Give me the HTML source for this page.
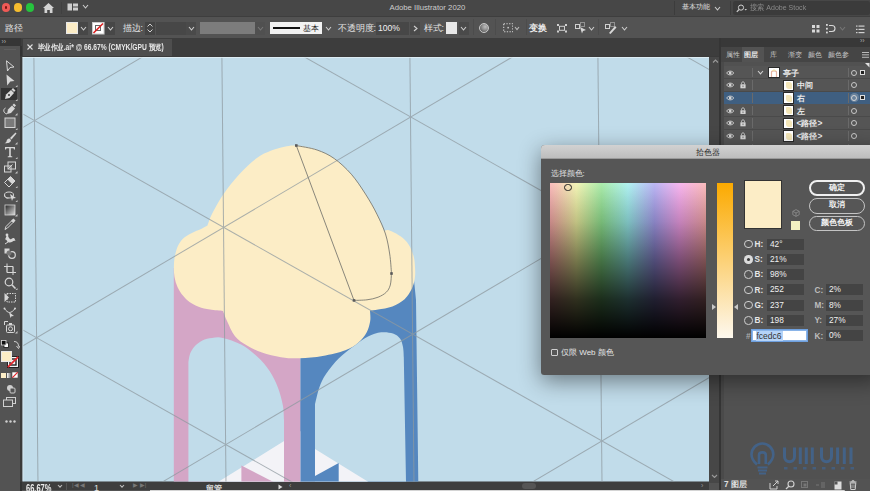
<!DOCTYPE html>
<html><head><meta charset="utf-8">
<style>
*{margin:0;padding:0;box-sizing:border-box}
html,body{width:870px;height:491px;overflow:hidden;background:#535353;font-family:"Liberation Sans",sans-serif;color:#ddd}
.a{position:absolute}
.btn{border-radius:8px;font-size:8.2px;color:#f2f2f2;text-align:center;line-height:13px;font-weight:bold}
.lbl{font-size:8.2px;color:#e6e6e6;line-height:12px;font-weight:bold;margin-top:0.9px}
.inp{width:37px;height:11px;background:#444444;font-size:8.3px;color:#f0f0f0;line-height:11.5px;padding-left:3px}
</style></head><body>
<div class="a" style="left:0px;top:0px;width:870px;height:16px;background:#474747;"></div>
<div class="a" style="left:1.7999999999999998px;top:3.3px;width:8.4px;height:8.4px;border-radius:50%;background:#ee5a56"></div>
<div class="a" style="left:13.8px;top:3.3px;width:8.4px;height:8.4px;border-radius:50%;background:#f5bd2f"></div>
<div class="a" style="left:25.8px;top:3.3px;width:8.4px;height:8.4px;border-radius:50%;background:#26c33e"></div>
<div class="a" style="left:4.6px;top:5.9px;width:2.8px;height:2.8px;border-radius:50%;background:#7a1410"></div>
<svg class="a" style="left:42px;top:2px" width="13" height="12"><path d="M6.5,1 L12,6 L10.5,6 L10.5,11 L7.8,11 L7.8,8 L5.2,8 L5.2,11 L2.5,11 L2.5,6 L1,6 Z" fill="#d4d4d4"/></svg>
<div class="a" style="left:61.3px;top:2px;width:0.8px;height:12px;background:#404040;"></div>
<svg class="a" style="left:66.5px;top:2.6px" width="12" height="8"><rect x="0.5" y="0.5" width="4.5" height="7" fill="#cfcfcf"/><rect x="6" y="0.5" width="5" height="3" fill="#cfcfcf"/><rect x="6" y="4.5" width="5" height="3" fill="#cfcfcf"/></svg>
<svg class="a" style="left:81.5px;top:3.8px" width="7" height="5"><path d="M1,1 L3.50,4 L6,1" fill="none" stroke="#cfcfcf" stroke-width="1.1"/></svg>
<div class="a" style="left:389.5px;top:2.5px;font-size:7.75px;line-height:9.75px;color:#cccccc;white-space:nowrap;">Adobe Illustrator 2020</div>
<div class="a" style="left:674px;top:1px;width:1px;height:14px;background:#3c3c3c;"></div>
<div class="a" style="left:682px;top:3px;font-size:6.7px;line-height:8.7px;color:#e0e0e0;white-space:nowrap;">基本功能</div>
<svg class="a" style="left:713.5px;top:5.5px" width="7" height="5"><path d="M1,1 L3.50,4 L6,1" fill="none" stroke="#cfcfcf" stroke-width="1.1"/></svg>
<div class="a" style="left:730px;top:1px;width:1px;height:14px;background:#3c3c3c;"></div>
<div class="a" style="left:733px;top:1px;width:137px;height:14px;background:#3b3b3b;border-radius:2px"></div>
<svg class="a" style="left:736px;top:3.5px" width="12" height="9"><circle cx="5" cy="3.6" r="2.6" fill="none" stroke="#cfcfcf" stroke-width="1"/><path d="M3.1,5.5 L0.8,7.8" stroke="#cfcfcf" stroke-width="1.2"/><path d="M8.5,5 L11,5 L9.75,6.5 Z" fill="#cfcfcf"/></svg>
<div class="a" style="left:749.5px;top:2.5px;font-size:7.8px;line-height:9.8px;color:#8a8a8a;white-space:nowrap;transform:scaleX(0.9);transform-origin:0 0">搜索 Adobe Stock</div>
<div class="a" style="left:0px;top:16px;width:870px;height:22px;background:#535353;"></div>
<div class="a" style="left:0px;top:16px;width:870px;height:0.6px;background:#3e3e3e;"></div>
<div class="a" style="left:5px;top:23px;font-size:8.6px;line-height:10.6px;color:#e2e2e2;white-space:nowrap;">路径</div>
<div class="a" style="left:66px;top:22.3px;width:11.5px;height:11.5px;background:#fcedc6;border:1px solid #e8e8e8"></div>
<div class="a" style="left:78px;top:21.5px;width:10px;height:13px;background:#474747;"></div>
<svg class="a" style="left:79.5px;top:25.5px" width="7" height="5"><path d="M1,1 L3.50,4 L6,1" fill="none" stroke="#cfcfcf" stroke-width="1.1"/></svg>
<svg class="a" style="left:92px;top:22px" width="12.5" height="12.5"><rect x="0.5" y="0.5" width="11.5" height="11.5" fill="#fff" stroke="#ccc"/><rect x="3.5" y="3.5" width="5" height="5" fill="none" stroke="#666" stroke-width="1"/><path d="M1.5,11 L11,1.5" stroke="#d22" stroke-width="1.6"/></svg>
<div class="a" style="left:105px;top:21.5px;width:10px;height:13px;background:#474747;"></div>
<svg class="a" style="left:106.5px;top:25.5px" width="7" height="5"><path d="M1,1 L3.50,4 L6,1" fill="none" stroke="#cfcfcf" stroke-width="1.1"/></svg>
<div class="a" style="left:122.5px;top:23px;font-size:8.6px;line-height:10.6px;color:#e2e2e2;white-space:nowrap;">描边:</div>
<div class="a" style="left:144.5px;top:21.5px;width:10.5px;height:13px;background:#444;"></div>
<svg class="a" style="left:146px;top:22px" width="8" height="12"><path d="M1.5,4.5 L4,2 L6.5,4.5 M1.5,7.5 L4,10 L6.5,7.5" fill="none" stroke="#cfcfcf" stroke-width="1"/></svg>
<div class="a" style="left:156px;top:21.5px;width:30px;height:13px;background:#474747;"></div>
<div class="a" style="left:186px;top:21.5px;width:10px;height:13px;background:#4a4a4a;"></div>
<svg class="a" style="left:187.5px;top:25.5px" width="7" height="5"><path d="M1,1 L3.50,4 L6,1" fill="none" stroke="#cfcfcf" stroke-width="1.1"/></svg>
<div class="a" style="left:200px;top:22.3px;width:54.5px;height:12.2px;background:#7c7c7c;"></div>
<div class="a" style="left:255px;top:21.5px;width:10px;height:13px;background:#505050;"></div>
<svg class="a" style="left:256.5px;top:25.5px" width="7" height="5"><path d="M1,1 L3.50,4 L6,1" fill="none" stroke="#777" stroke-width="1.1"/></svg>
<div class="a" style="left:269.7px;top:22.3px;width:52.5px;height:12.2px;background:#f2f2f2;"></div>
<div class="a" style="left:273px;top:27.3px;width:27px;height:1.8px;background:#111;"></div>
<div class="a" style="left:303px;top:23px;font-size:8.3px;line-height:10.3px;color:#222;white-space:nowrap;">基本</div>
<svg class="a" style="left:324.5px;top:25.5px" width="7" height="5"><path d="M1,1 L3.50,4 L6,1" fill="none" stroke="#cfcfcf" stroke-width="1.1"/></svg>
<div class="a" style="left:337.5px;top:23px;font-size:8.6px;line-height:10.6px;color:#e2e2e2;white-space:nowrap;">不透明度:</div>
<div class="a" style="left:376px;top:21.5px;width:33px;height:13px;background:#474747;"></div>
<div class="a" style="left:378px;top:23.2px;font-size:8.6px;line-height:10.6px;color:#f0f0f0;white-space:nowrap;">100%</div>
<div class="a" style="left:410px;top:21.5px;width:10px;height:13px;background:#4a4a4a;"></div>
<svg class="a" style="left:412.5px;top:25px" width="6" height="7"><path d="M1,1 L4,3.5 L1,6" fill="none" stroke="#cfcfcf" stroke-width="1.1"/></svg>
<div class="a" style="left:423.5px;top:23px;font-size:8.6px;line-height:10.6px;color:#e2e2e2;white-space:nowrap;">样式:</div>
<div class="a" style="left:445.6px;top:22.3px;width:11.4px;height:11.6px;background:#e8e8e8;"></div>
<div class="a" style="left:459px;top:21.5px;width:10px;height:13px;background:#4a4a4a;"></div>
<svg class="a" style="left:460.0px;top:25.5px" width="7" height="5"><path d="M1,1 L3.50,4 L6,1" fill="none" stroke="#cfcfcf" stroke-width="1.1"/></svg>
<div class="a" style="left:472.5px;top:19px;width:0.8px;height:16px;background:#4c4c4c;"></div>
<div class="a" style="left:495.3px;top:19px;width:0.8px;height:16px;background:#4c4c4c;"></div>
<div class="a" style="left:525.9px;top:19px;width:0.8px;height:16px;background:#4c4c4c;"></div>
<div class="a" style="left:597.6px;top:19px;width:0.8px;height:16px;background:#4c4c4c;"></div>
<div class="a" style="left:478.8px;top:22.8px;width:10.4px;height:10.4px;border-radius:50%;border:1px solid #c8c8c8;background:radial-gradient(circle at 65% 35%,#bdbdbd,#8a8a8a 45%,#5a5a5a 80%)"></div>
<svg class="a" style="left:502.5px;top:23.2px" width="10.5" height="9.5"><rect x="0.7" y="0.7" width="9" height="8" fill="none" stroke="#d0d0d0" stroke-width="1.1" stroke-dasharray="1.3 1.4"/><rect x="4.4" y="3.9" width="1.5" height="1.5" fill="#d0d0d0"/></svg>
<svg class="a" style="left:513.5px;top:26.2px" width="6" height="4.5"><path d="M1,1 L3.00,3.5 L5,1" fill="none" stroke="#bbb" stroke-width="1.1"/></svg>
<div class="a" style="left:529px;top:23px;font-size:8.8px;line-height:10.8px;color:#ececec;white-space:nowrap;font-weight:bold">变换</div>
<svg class="a" style="left:556.5px;top:24px" width="10" height="8.5"><rect x="2.5" y="2.3" width="5" height="4" fill="none" stroke="#d0d0d0" stroke-width="1"/><g fill="#d0d0d0"><rect x="0" y="0" width="2" height="2"/><rect x="8" y="0" width="2" height="2"/><rect x="0" y="6.5" width="2" height="2"/><rect x="8" y="6.5" width="2" height="2"/></g></svg>
<svg class="a" style="left:575px;top:22px" width="12" height="12"><g fill="none" stroke="#d0d0d0" stroke-width="1"><rect x="0.5" y="2.5" width="4" height="4"/><rect x="5.5" y="0.5" width="4" height="4" stroke-dasharray="1 1"/></g><path d="M5,5 L11,8 L8,9 L7,11.5 Z" fill="#d8d8d8"/></svg>
<svg class="a" style="left:587.5px;top:25.5px" width="7" height="5"><path d="M1,1 L3.50,4 L6,1" fill="none" stroke="#cfcfcf" stroke-width="1.1"/></svg>
<svg class="a" style="left:605px;top:22px" width="12" height="12"><g fill="none" stroke="#d0d0d0" stroke-width="1"><rect x="0.5" y="2.5" width="4" height="4"/><rect x="5.5" y="0.5" width="4" height="4" stroke-dasharray="1 1"/></g><path d="M4,11 L10,4 L11.5,5.5 L5.5,12 Z" fill="#d8d8d8"/></svg>
<svg class="a" style="left:620.5px;top:25.5px" width="7" height="5"><path d="M1,1 L3.50,4 L6,1" fill="none" stroke="#cfcfcf" stroke-width="1.1"/></svg>
<svg class="a" style="left:811.5px;top:24.5px" width="8" height="8"><g fill="#d8d8d8"><rect x="0" y="0" width="3" height="3"/><rect x="4.5" y="0" width="3" height="3"/><rect x="0" y="4.5" width="3" height="3"/><rect x="4.5" y="4.5" width="3" height="3"/></g></svg>
<svg class="a" style="left:826px;top:23.5px" width="10" height="10"><g fill="#d8d8d8"><rect x="0" y="0" width="1.8" height="1.8"/><rect x="0" y="3.8" width="1.8" height="1.8"/><rect x="0" y="7.6" width="1.8" height="1.8"/></g><path d="M3,1.5 L6,1.5 A3,3 0 0 1 6,7.5 L3,7.5" fill="none" stroke="#d8d8d8" stroke-width="1.1"/></svg>
<svg class="a" style="left:839.0px;top:25.5px" width="7" height="5"><path d="M1,1 L3.50,4 L6,1" fill="none" stroke="#777" stroke-width="1.1"/></svg>
<svg class="a" style="left:856px;top:24.5px" width="9" height="9"><g fill="#d0d0d0"><rect x="0" y="0.5" width="1.5" height="1.2"/><rect x="2.5" y="0.5" width="6" height="1.2"/><rect x="0" y="3.8" width="1.5" height="1.2"/><rect x="2.5" y="3.8" width="6" height="1.2"/><rect x="0" y="7" width="1.5" height="1.2"/><rect x="2.5" y="7" width="6" height="1.2"/></g></svg>
<div class="a" style="left:0px;top:38px;width:870px;height:19px;background:#3d3d3d;"></div>
<div class="a" style="left:22.5px;top:39px;width:149px;height:17.5px;background:#4e4e4e;"></div>
<svg class="a" style="left:26.5px;top:44px" width="6" height="6"><path d="M0.5,0.5 L5.5,5.5 M5.5,0.5 L0.5,5.5" stroke="#e0e0e0" stroke-width="1.1"/></svg>
<div class="a" style="left:37.5px;top:41.8px;font-size:8.3px;line-height:10.3px;color:#e8e8e8;white-space:nowrap;font-weight:bold;transform:scaleX(0.805);transform-origin:0 0">毕业作业.ai* @ 66.67% (CMYK/GPU 预览)</div>
<div class="a" style="left:0px;top:38px;width:20.5px;height:8px;background:#363636;"></div>
<div class="a" style="left:1.5px;top:37px;font-size:7px;line-height:9px;color:#aaa;white-space:nowrap;">››</div>
<div class="a" style="left:0px;top:46px;width:19.6px;height:445px;background:#535353;"></div>
<div class="a" style="left:19.6px;top:46px;width:2.8px;height:445px;background:#333333;"></div>
<div class="a" style="left:4px;top:49px;width:12px;height:0.8px;background:#5e5e5e;"></div>
<div class="a" style="left:1.3px;top:87.8px;width:15.8px;height:12.5px;background:#333333;"></div>
<svg class="a" style="left:3px;top:59.6px" width="14" height="12"><path d="M3.5,0.8 L11,7 L7,7.5 L4.5,11 Z" fill="none" stroke="#d6d6d6" stroke-width="1"/></svg>
<svg class="a" style="left:3px;top:74.0px" width="14" height="12"><path d="M3.5,0.5 L11.5,7 L7.3,7.6 L4.2,11.5 Z" fill="#d6d6d6"/></svg>
<svg class="a" style="left:15px;top:84.5px" width="2.5" height="2.5"><path d="M2.5,0 L2.5,2.5 L0,2.5 Z" fill="#c8c8c8"/></svg>
<svg class="a" style="left:3px;top:88.4px" width="14" height="12"><path d="M2,11 L3,6.5 L8,2 L11,5 L6.5,10 Z" fill="#d6d6d6"/><path d="M8.5,1.5 L10,0 L12.5,2.5 L11,4" fill="#d6d6d6"/><circle cx="6" cy="7" r="1" fill="#333"/></svg>
<svg class="a" style="left:15px;top:98.9px" width="2.5" height="2.5"><path d="M2.5,0 L2.5,2.5 L0,2.5 Z" fill="#c8c8c8"/></svg>
<svg class="a" style="left:3px;top:102.9px" width="14" height="12"><path d="M4,11 L5,6.5 L9,2.5 L12,5.5 L8,10 Z" fill="#d6d6d6"/><path d="M9.5,2 L11,0.5 L13,2.5 L11.5,4" fill="#d6d6d6"/><path d="M4,11 C0,10 0,6 2.5,5" fill="none" stroke="#d6d6d6" stroke-width="1"/></svg>
<svg class="a" style="left:15px;top:113.4px" width="2.5" height="2.5"><path d="M2.5,0 L2.5,2.5 L0,2.5 Z" fill="#c8c8c8"/></svg>
<svg class="a" style="left:3px;top:117.3px" width="14" height="12"><rect x="2" y="1" width="10" height="9.5" fill="#7a7a7a" stroke="#d6d6d6" stroke-width="1"/></svg>
<svg class="a" style="left:15px;top:127.8px" width="2.5" height="2.5"><path d="M2.5,0 L2.5,2.5 L0,2.5 Z" fill="#c8c8c8"/></svg>
<svg class="a" style="left:3px;top:131.7px" width="14" height="12"><path d="M12.5,0.5 L7,6 L8.5,7.5 L13.5,1.5 Z" fill="#d6d6d6"/><path d="M6.5,6.5 C4.5,6.5 3.5,8 3.5,9.5 C3,10.5 2,11 1.5,11.2 C4,11.5 8,11 8,8 Z" fill="#d6d6d6"/></svg>
<svg class="a" style="left:15px;top:142.2px" width="2.5" height="2.5"><path d="M2.5,0 L2.5,2.5 L0,2.5 Z" fill="#c8c8c8"/></svg>
<svg class="a" style="left:3px;top:146.1px" width="14" height="12"><path d="M2,1 L12,1 L12,3.5 L11,3.5 L10.5,2.2 L7.8,2.2 L7.8,10 L9.3,10.5 L9.3,11.2 L4.7,11.2 L4.7,10.5 L6.2,10 L6.2,2.2 L3.5,2.2 L3,3.5 L2,3.5 Z" fill="#d6d6d6"/></svg>
<svg class="a" style="left:15px;top:156.6px" width="2.5" height="2.5"><path d="M2.5,0 L2.5,2.5 L0,2.5 Z" fill="#c8c8c8"/></svg>
<svg class="a" style="left:3px;top:160.5px" width="14" height="12"><rect x="1.5" y="5" width="6.5" height="6" fill="none" stroke="#d6d6d6" stroke-width="1"/><rect x="5" y="1" width="7.5" height="7" fill="none" stroke="#d6d6d6" stroke-width="1"/><path d="M5,8 L9.5,3.5" stroke="#d6d6d6" stroke-width="1"/></svg>
<svg class="a" style="left:15px;top:171.0px" width="2.5" height="2.5"><path d="M2.5,0 L2.5,2.5 L0,2.5 Z" fill="#c8c8c8"/></svg>
<svg class="a" style="left:3px;top:175.0px" width="14" height="12"><path d="M1.5,7.5 L7.5,1.5 L12,6 L6,12 Z" fill="none" stroke="#d6d6d6" stroke-width="1"/><path d="M4.5,4.5 L7.5,1.5 L12,6 L9,9 Z" fill="#d6d6d6"/></svg>
<svg class="a" style="left:15px;top:185.5px" width="2.5" height="2.5"><path d="M2.5,0 L2.5,2.5 L0,2.5 Z" fill="#c8c8c8"/></svg>
<svg class="a" style="left:3px;top:189.4px" width="14" height="12"><ellipse cx="6" cy="6" rx="4.5" ry="3" fill="none" stroke="#d6d6d6" stroke-width="1"/><path d="M1.5,6 C2,9 4,9.5 5.5,9" fill="none" stroke="#d6d6d6"/><path d="M7,5 L13,9 L10,9.5 L9,12 Z" fill="#d6d6d6"/></svg>
<svg class="a" style="left:15px;top:199.9px" width="2.5" height="2.5"><path d="M2.5,0 L2.5,2.5 L0,2.5 Z" fill="#c8c8c8"/></svg>
<svg class="a" style="left:3px;top:203.8px" width="14" height="12"><defs><linearGradient id="tg" x1="0" y1="0" x2="1" y2="1"><stop offset="0" stop-color="#222"/><stop offset="1" stop-color="#ddd"/></linearGradient></defs><rect x="2" y="1" width="10" height="10" fill="url(#tg)" stroke="#d6d6d6" stroke-width="0.8"/></svg>
<svg class="a" style="left:15px;top:214.3px" width="2.5" height="2.5"><path d="M2.5,0 L2.5,2.5 L0,2.5 Z" fill="#c8c8c8"/></svg>
<svg class="a" style="left:3px;top:218.2px" width="14" height="12"><path d="M2,11.5 L3,8.5 L8.5,3 L10,4.5 L4.5,10 Z" fill="none" stroke="#d6d6d6" stroke-width="1"/><path d="M8,2.5 L10.5,0.5 L12.5,2.5 L10.5,5 Z" fill="#d6d6d6"/></svg>
<svg class="a" style="left:3px;top:232.6px" width="14" height="12"><path d="M4,2 C6,3 5,5 7,6 C9,7 9,4 11.5,5.5 L12.5,8 C10,7 9,10 6,9.5 C3.5,9 4,6 2,6.5 Z" fill="#d6d6d6"/><circle cx="4" cy="2" r="1.4" fill="#d6d6d6"/><path d="M2,11 L5,9" stroke="#d6d6d6"/></svg>
<svg class="a" style="left:3px;top:247.1px" width="14" height="12"><rect x="1.5" y="1.5" width="5" height="5" fill="#d6d6d6"/><circle cx="9" cy="8" r="3.3" fill="none" stroke="#d6d6d6" stroke-width="1.2"/><circle cx="6" cy="6" r="2.5" fill="#777"/></svg>
<svg class="a" style="left:3px;top:262.5px" width="14" height="12"><path d="M4,0.5 L4,9.5 L13,9.5 M1,3.5 L10,3.5 L10,12" fill="none" stroke="#d6d6d6" stroke-width="1"/><path d="M4,3.5 L10,3.5 L10,9.5 L4,9.5 Z" fill="none" stroke="#d6d6d6" stroke-width="0.6"/></svg>
<svg class="a" style="left:3px;top:277.4px" width="14" height="12"><circle cx="6" cy="5" r="3.8" fill="none" stroke="#d6d6d6" stroke-width="1.2"/><path d="M8.8,7.8 L12.5,11.5" stroke="#d6d6d6" stroke-width="1.6"/></svg>
<svg class="a" style="left:15px;top:287.9px" width="2.5" height="2.5"><path d="M2.5,0 L2.5,2.5 L0,2.5 Z" fill="#c8c8c8"/></svg>
<svg class="a" style="left:3px;top:291.8px" width="14" height="12"><path d="M1.5,1 L6,5.5 L1.5,10 Z" fill="#d6d6d6"/><rect x="4" y="1.5" width="8.5" height="8.5" fill="none" stroke="#d6d6d6" stroke-dasharray="1.5 1" stroke-width="1"/></svg>
<svg class="a" style="left:3px;top:306.2px" width="14" height="12"><path d="M1.5,2.5 C3,5 5,6.5 6.5,6.5 C8,6.5 10.5,5 12,2.5" fill="none" stroke="#d6d6d6" stroke-width="1"/><path d="M6,6 L11,10 L8.5,10.3 L7.5,12 Z" fill="#d6d6d6"/><circle cx="1.5" cy="2.5" r="1" fill="#d6d6d6"/><circle cx="12" cy="2.5" r="1" fill="#d6d6d6"/></svg>
<svg class="a" style="left:3px;top:320.7px" width="14" height="12"><path d="M1.5,0.5 L5,0.5 M1.5,0.5 L1.5,4" stroke="#d6d6d6" fill="none"/><rect x="3.5" y="4" width="8" height="7.5" rx="1" fill="none" stroke="#d6d6d6"/><circle cx="7.5" cy="7.8" r="2" fill="none" stroke="#d6d6d6"/><rect x="6" y="2" width="3" height="2" fill="#d6d6d6"/></svg>
<svg class="a" style="left:15px;top:331.2px" width="2.5" height="2.5"><path d="M2.5,0 L2.5,2.5 L0,2.5 Z" fill="#c8c8c8"/></svg>
<svg class="a" style="left:0.5px;top:340px" width="8" height="8"><rect x="3" y="3" width="4.5" height="4.5" fill="#fff" stroke="#111" stroke-width="0.8"/><rect x="0.5" y="0.5" width="4.5" height="4.5" fill="#111" stroke="#ddd" stroke-width="0.8"/></svg>
<svg class="a" style="left:12.8px;top:339.5px" width="7" height="9"><path d="M1,1.5 C4,1.5 5.5,3 5.5,6.5" fill="none" stroke="#d0d0d0" stroke-width="1"/><path d="M3.5,6 L5.5,8.5 L7,6" fill="none" stroke="#d0d0d0" stroke-width="1"/></svg>
<svg class="a" style="left:6.5px;top:356px" width="12" height="12"><rect x="0.5" y="0.5" width="11" height="11" fill="#f4f4f4" stroke="#222" stroke-width="1"/><rect x="3" y="3" width="6" height="6" fill="none" stroke="#222" stroke-width="1.4"/><path d="M0.8,11.2 L11.2,0.8" stroke="#e0242a" stroke-width="1.8"/></svg>
<div class="a" style="left:1px;top:351.3px;width:10.6px;height:10.4px;background:#fcedc6;border:1px solid #e8e8e8"></div>
<div class="a" style="left:1.2px;top:372.7px;width:4.9px;height:4.9px;background:#fcedc6;"></div>
<div class="a" style="left:6.7px;top:372.7px;width:4.3px;height:4.9px;background:linear-gradient(to right,#fff,#666);"></div>
<svg class="a" style="left:11.6px;top:372.2px" width="6" height="6"><rect x="0.3" y="0.3" width="5.4" height="5.4" fill="#fff"/><path d="M0.3,5.7 L5.7,0.3" stroke="#e0242a" stroke-width="1.2"/></svg>
<svg class="a" style="left:5.5px;top:383.5px" width="10" height="10"><circle cx="4" cy="4" r="3" fill="#cfcfcf"/><rect x="4" y="4" width="5" height="5" rx="1" fill="#535353" stroke="#cfcfcf" stroke-width="1"/></svg>
<svg class="a" style="left:3px;top:397px" width="13" height="10"><rect x="3.5" y="0.5" width="9" height="6" fill="none" stroke="#cfcfcf"/><rect x="0.5" y="3" width="9" height="6.5" fill="#535353" stroke="#cfcfcf"/></svg>
<svg class="a" style="left:4.5px;top:419.8px" width="12" height="3"><g fill="#d0d0d0"><circle cx="1.5" cy="1.5" r="1.2"/><circle cx="5.5" cy="1.5" r="1.2"/><circle cx="9.5" cy="1.5" r="1.2"/></g></svg>
<div class="a" style="left:20px;top:56px;width:700px;height:426px;background:#3a3a3a"></div>
<svg width="870" height="491" viewBox="0 0 870 491" style="position:absolute;left:0;top:0">
<defs><clipPath id="cv"><rect x="22.5" y="57" width="687" height="424.5"/></clipPath></defs>
<g clip-path="url(#cv)">
<rect x="22" y="56" width="690" height="426" fill="#c1dcea"/>
<rect x="173.8" y="268" width="126.7" height="214" fill="#d4a6c6"/>
<path d="M300.5,300 L405,290 L414,280 L416,300 L418.3,482 L300.5,482 Z" fill="#5587bf"/>
<path d="M188.4,482 L188.4,362  C188.7,360.7 189.0,356.6 190.0,354.0 C191.0,351.4 192.4,348.8 194.5,346.5 C196.6,344.2 199.5,341.8 202.4,340.4 C205.3,339.0 208.6,338.4 212.0,338.0 C215.4,337.6 218.0,336.8 222.8,337.9 C227.7,339.0 235.3,341.4 241.1,344.5 C246.9,347.6 252.6,352.3 257.4,356.7 C262.1,361.1 266.2,365.8 269.6,370.9 C273.0,376.0 275.6,381.4 277.8,387.2 C280.0,393.0 281.9,400.1 282.9,405.6 C283.9,411.1 283.8,417.6 284.0,420.0 L284,482 Z" fill="#c1dcea"/>
<path d="M315,482 L315,404  C315.8,401.2 317.7,392.0 319.5,387.0 C321.3,382.0 322.8,378.8 326.0,374.0 C329.2,369.2 334.0,363.0 338.9,358.2 C343.8,353.4 350.3,348.8 355.2,345.2 C360.1,341.6 363.7,338.6 368.0,336.5 C372.3,334.4 377.0,332.8 381.2,332.3 C385.4,331.8 389.9,332.5 393.0,333.5 C396.1,334.5 398.3,336.2 400.0,338.5 C401.7,340.8 402.4,343.9 403.0,347.0 C403.6,350.1 403.7,355.3 403.8,357.0 L406,482 Z" fill="#c1dcea"/>
<path d="M218,482 L283.3,441.5 L300.5,431 L315,449 L368.5,482 Z" fill="#f3f3f7"/>
<path d="M241.4,465.6 L241.4,482 L273.5,482 Z" fill="#d4a6c6"/>
<rect x="284" y="400" width="16.5" height="82" fill="#d4a6c6"/>
<rect x="300.5" y="400" width="14.5" height="82" fill="#5587bf"/>
<path d="M315,476 L338.7,463 L338.7,482 L315,482 Z" fill="#5587bf"/>
<path d="M207.5,225.5 C208.3,223.5 209.5,218.8 212.2,213.6 C214.9,208.3 219.1,200.5 223.6,194.0 C228.1,187.5 233.6,180.5 239.1,174.5 C244.6,168.5 251.6,161.9 256.9,158.0 C262.2,154.1 266.1,152.7 270.7,150.8 C275.3,148.9 280.2,147.7 284.5,146.8 C288.8,145.9 290.9,145.1 296.3,145.6 C301.7,146.1 310.8,147.8 317.1,150.0 C323.4,152.2 328.5,154.5 334.2,158.5 C339.9,162.5 346.1,168.3 351.3,174.2 C356.5,180.1 361.2,187.4 365.5,194.1 C369.8,200.8 373.8,207.9 376.9,214.1 C380.0,220.2 382.8,228.2 384.0,231.0 C384.8,230.9 386.2,229.3 389.0,230.2 C391.8,231.1 397.2,233.9 400.5,236.3 C403.8,238.7 406.4,241.0 408.6,244.4 C410.8,247.8 412.6,252.5 413.7,256.6 C414.8,260.7 414.9,265.1 415.1,268.8 C415.3,272.5 415.3,275.6 414.7,279.0 C414.1,282.4 413.4,285.7 411.7,289.1 C410.0,292.5 407.8,296.4 404.6,299.3 C401.4,302.2 396.8,304.7 392.4,306.4 C388.0,308.1 381.8,308.7 378.1,309.4 C374.4,310.1 371.4,310.3 370.0,310.5 C370.0,312.2 370.8,317.3 370.2,321.0 C369.6,324.7 368.6,328.9 366.6,332.5 C364.6,336.1 361.9,339.5 358.4,342.5 C354.9,345.5 351.4,348.1 345.4,350.3 C339.4,352.6 330.2,354.7 322.6,356.0 C315.0,357.3 306.7,358.1 299.8,358.3 C292.9,358.5 287.3,358.2 281.0,357.2 C274.7,356.2 267.7,354.4 262.0,352.5 C256.3,350.6 251.5,348.2 247.0,345.5 C242.5,342.8 238.3,340.4 235.0,336.3 C231.7,332.2 229.0,325.2 227.0,321.0 C225.0,316.8 223.7,312.7 223.0,311.0 C220.8,310.8 214.1,310.3 210.0,309.6 C205.9,308.9 202.0,308.1 198.6,306.8 C195.2,305.5 192.1,303.9 189.5,302.0 C186.9,300.1 184.9,298.1 182.9,295.6 C180.9,293.1 178.9,290.1 177.5,287.0 C176.1,283.9 175.1,280.5 174.5,277.0 C173.9,273.5 173.8,269.6 173.9,266.0 C174.0,262.4 174.2,259.0 175.0,255.5 C175.8,252.0 176.9,247.9 178.4,245.0 C179.9,242.1 181.8,239.8 184.0,237.8 C186.2,235.8 189.2,234.3 191.9,232.9 C194.6,231.5 197.4,230.7 200.0,229.5 C202.6,228.3 206.2,226.2 207.5,225.5 Z" fill="#fcedc6"/>
<g transform="translate(34.5 120.6) rotate(-0.55)" stroke="#8f9aa0" stroke-width="1" opacity="0.75"><line x1="-188.0" y1="-400.0" x2="-188.0" y2="600.0"/><line x1="0.0" y1="-400.0" x2="0.0" y2="600.0"/><line x1="188.0" y1="-400.0" x2="188.0" y2="600.0"/><line x1="376.0" y1="-400.0" x2="376.0" y2="600.0"/><line x1="564.0" y1="-400.0" x2="564.0" y2="600.0"/><line x1="752.0" y1="-400.0" x2="752.0" y2="600.0"/><line x1="-200.0" y1="-984.3" x2="900.0" y2="-349.2"/><line x1="-200.0" y1="-753.3" x2="900.0" y2="-1388.4"/><line x1="-200.0" y1="-767.1" x2="900.0" y2="-132.0"/><line x1="-200.0" y1="-536.1" x2="900.0" y2="-1171.2"/><line x1="-200.0" y1="-549.9" x2="900.0" y2="85.2"/><line x1="-200.0" y1="-318.9" x2="900.0" y2="-954.0"/><line x1="-200.0" y1="-332.7" x2="900.0" y2="302.4"/><line x1="-200.0" y1="-101.7" x2="900.0" y2="-736.8"/><line x1="-200.0" y1="-115.5" x2="900.0" y2="519.6"/><line x1="-200.0" y1="115.5" x2="900.0" y2="-519.6"/><line x1="-200.0" y1="101.7" x2="900.0" y2="736.8"/><line x1="-200.0" y1="332.7" x2="900.0" y2="-302.4"/><line x1="-200.0" y1="318.9" x2="900.0" y2="954.0"/><line x1="-200.0" y1="549.9" x2="900.0" y2="-85.2"/><line x1="-200.0" y1="536.1" x2="900.0" y2="1171.2"/><line x1="-200.0" y1="767.1" x2="900.0" y2="132.0"/><line x1="-200.0" y1="753.3" x2="900.0" y2="1388.4"/><line x1="-200.0" y1="984.3" x2="900.0" y2="349.2"/><line x1="-200.0" y1="970.5" x2="900.0" y2="1605.6"/><line x1="-200.0" y1="1201.5" x2="900.0" y2="566.4"/><line x1="-200.0" y1="1187.7" x2="900.0" y2="1822.8"/><line x1="-200.0" y1="1418.7" x2="900.0" y2="783.6"/><line x1="-200.0" y1="1404.9" x2="900.0" y2="2040.0"/><line x1="-200.0" y1="1635.9" x2="900.0" y2="1000.8"/></g>
<rect x="22.5" y="57" width="687" height="0.8" fill="#e4f0f6"/><rect x="22.5" y="57" width="0.8" height="424.5" fill="#e4f0f6"/>
<path d="M296.3,145.6 C299.8,146.3 310.8,147.8 317.1,150.0 C323.4,152.2 328.5,154.5 334.2,158.5 C339.9,162.5 346.1,168.3 351.3,174.2 C356.5,180.1 361.2,187.4 365.5,194.1 C369.8,200.8 373.6,207.4 376.9,214.1 C380.2,220.8 383.4,227.3 385.5,234.0 C387.6,240.7 388.7,247.5 389.7,254.0 C390.7,260.5 391.2,270.0 391.5,273.2 C391.3,275.2 391.2,281.8 390.3,285.0 C389.4,288.2 388.3,290.2 386.3,292.2 C384.3,294.2 381.3,295.9 378.1,297.2 C374.9,298.5 371.0,299.3 367.0,299.8 C363.0,300.3 356.2,300.3 354.0,300.4 L296.3,145.5" fill="none" stroke="#7c7a72" stroke-width="0.9"/>
<g fill="#5a5a5a"><rect x="295" y="144.2" width="2.6" height="2.6"/><rect x="390.2" y="272.2" width="2.6" height="2.6"/><rect x="352.7" y="299.1" width="2.6" height="2.6"/></g>
</g>
</svg>
<div class="a" style="left:709.3px;top:56.5px;width:10px;height:426px;background:#474747;"></div>
<svg class="a" style="left:711.5px;top:59px" width="7" height="4.5"><path d="M1,3.5 L3.5,1 L6,3.5" fill="none" stroke="#999" stroke-width="1.1"/></svg>
<svg class="a" style="left:711.0px;top:473.8px" width="7" height="4.5"><path d="M1,1 L3.50,3.5 L6,1" fill="none" stroke="#999" stroke-width="1.1"/></svg>
<div class="a" style="left:719.3px;top:38px;width:1.7px;height:453px;background:#353535;"></div>
<div class="a" style="left:721px;top:38px;width:149px;height:8.6px;background:#383838;"></div>
<div class="a" style="left:860px;top:36px;font-size:7px;line-height:9px;color:#aaa;white-space:nowrap;">››</div>
<div class="a" style="left:721px;top:46.6px;width:149px;height:15.8px;background:#454545;"></div>
<div class="a" style="left:741.8px;top:46.6px;width:22px;height:15.8px;background:#535353;"></div>
<div class="a" style="left:726px;top:50px;font-size:7.2px;line-height:9.2px;color:#c4c4c4;white-space:nowrap;">属性</div>
<div class="a" style="left:743.5px;top:50px;font-size:7.2px;line-height:9.2px;color:#e8e8e8;white-space:nowrap;font-weight:bold">图层</div>
<div class="a" style="left:770px;top:50px;font-size:7.2px;line-height:9.2px;color:#c4c4c4;white-space:nowrap;">库</div>
<div class="a" style="left:788px;top:50px;font-size:7.2px;line-height:9.2px;color:#c4c4c4;white-space:nowrap;">渐变</div>
<div class="a" style="left:808px;top:50px;font-size:7.2px;line-height:9.2px;color:#c4c4c4;white-space:nowrap;">颜色</div>
<div class="a" style="left:827.5px;top:50px;font-size:7.2px;line-height:9.2px;color:#c4c4c4;white-space:nowrap;">颜色参</div>
<svg class="a" style="left:862px;top:52px" width="7" height="6"><g fill="#c8c8c8"><rect y="0" width="7" height="0.9"/><rect y="2.4" width="7" height="0.9"/><rect y="4.8" width="7" height="0.9"/></g></svg>
<div class="a" style="left:721px;top:62.4px;width:149px;height:420px;background:#515151;"></div>
<div class="a" style="left:721px;top:62.4px;width:3px;height:420px;background:#4a4a4a;"></div>
<div class="a" style="left:724px;top:66.3px;width:146px;height:12.0px;background:#555555;"></div>
<div class="a" style="left:724px;top:78.39999999999999px;width:146px;height:0.6px;background:#4a4a4a;"></div>
<svg class="a" style="left:725.8px;top:69.5px" width="8.4" height="6"><path d="M0.6,3 C2.2,0.5 6.2,0.5 7.8,3 C6.2,5.5 2.2,5.5 0.6,3 Z" fill="none" stroke="#d4d4d4" stroke-width="0.9"/><circle cx="4.2" cy="3" r="1.4" fill="#d4d4d4"/></svg>
<div class="a" style="left:752px;top:67.8px;width:0.8px;height:9.5px;background:#6a6a6a;"></div>
<svg class="a" style="left:757.0px;top:70.1px" width="7" height="4.8"><path d="M1,1 L3.50,3.8 L6,1" fill="none" stroke="#d0d0d0" stroke-width="1.1"/></svg>
<div class="a" style="left:768px;top:66.8px;width:11.5px;height:11.5px;background:#fff;border:1px solid #2a2a2a"><svg width="10" height="10" style="position:absolute;left:0;top:0"><path d="M2.5,9 L2.5,4 C2.5,2.5 7.5,2.5 7.5,4 L7.5,9" fill="none" stroke="#e6b3a0" stroke-width="1.2"/><path d="M3,3 C4,1 6,1 7,3" fill="#f3dfa8"/></svg></div>
<div class="a" style="left:782.5px;top:67.6px;font-size:8.4px;line-height:10.4px;color:#e8e8e8;white-space:nowrap;font-weight:bold">亭子</div>
<div class="a" style="left:848.3px;top:67.8px;width:0.8px;height:9.5px;background:#6a6a6a;"></div>
<div class="a" style="left:851px;top:69.5px;width:6px;height:6px;border:1px solid #c8c8c8;border-radius:50%"></div>
<div class="a" style="left:860px;top:70.0px;width:5px;height:5px;border:1px solid #ddd;background:#222"></div>
<div class="a" style="left:724px;top:78.97px;width:146px;height:12.0px;background:#555555;"></div>
<div class="a" style="left:724px;top:91.07px;width:146px;height:0.6px;background:#4a4a4a;"></div>
<svg class="a" style="left:725.8px;top:82.17px" width="8.4" height="6"><path d="M0.6,3 C2.2,0.5 6.2,0.5 7.8,3 C6.2,5.5 2.2,5.5 0.6,3 Z" fill="none" stroke="#d4d4d4" stroke-width="0.9"/><circle cx="4.2" cy="3" r="1.4" fill="#d4d4d4"/></svg>
<svg class="a" style="left:740.3px;top:81.37px" width="6" height="7.5"><path d="M1.5,3.3 L1.5,2.4 C1.5,0.4 4.5,0.4 4.5,2.4 L4.5,3.3" fill="none" stroke="#d4d4d4" stroke-width="0.9"/><rect x="0.4" y="3.3" width="5.2" height="4" fill="#d4d4d4"/><rect x="2.6" y="4.5" width="0.8" height="1.6" fill="#555"/></svg>
<div class="a" style="left:752px;top:80.47px;width:0.8px;height:9.5px;background:#6a6a6a;"></div>
<div class="a" style="left:782.5px;top:79.5px;width:11px;height:11.5px;background:#fff;border:1px solid #2a2a2a"><div style="position:absolute;left:2px;top:1.5px;width:6px;height:7px;background:#f4e6b8;border-radius:1px 3px 1px 3px"></div></div>
<div class="a" style="left:796.5px;top:80.27px;font-size:8.4px;line-height:10.4px;color:#e8e8e8;white-space:nowrap;font-weight:bold">中间</div>
<div class="a" style="left:848.3px;top:80.47px;width:0.8px;height:9.5px;background:#6a6a6a;"></div>
<div class="a" style="left:851px;top:82.2px;width:6px;height:6px;border:1px solid #c8c8c8;border-radius:50%"></div>
<div class="a" style="left:724px;top:91.64px;width:146px;height:12.4px;background:#3f5f81;"></div>
<div class="a" style="left:724px;top:103.74px;width:146px;height:0.6px;background:#4a4a4a;"></div>
<svg class="a" style="left:725.8px;top:94.84px" width="8.4" height="6"><path d="M0.6,3 C2.2,0.5 6.2,0.5 7.8,3 C6.2,5.5 2.2,5.5 0.6,3 Z" fill="none" stroke="#d4d4d4" stroke-width="0.9"/><circle cx="4.2" cy="3" r="1.4" fill="#d4d4d4"/></svg>
<div class="a" style="left:752px;top:93.14px;width:0.8px;height:9.5px;background:#6a6a6a;"></div>
<div class="a" style="left:782.5px;top:92.1px;width:11px;height:11.5px;background:#fff;border:1px solid #2a2a2a"><div style="position:absolute;left:2px;top:1.5px;width:6px;height:7px;background:#f4e6b8;border-radius:1px 3px 1px 3px"></div></div>
<div class="a" style="left:796.5px;top:92.94px;font-size:8.4px;line-height:10.4px;color:#e8e8e8;white-space:nowrap;font-weight:bold">右</div>
<div class="a" style="left:848.3px;top:93.14px;width:0.8px;height:9.5px;background:#6a6a6a;"></div>
<div class="a" style="left:851px;top:94.8px;width:6px;height:6px;border:1px solid #c8c8c8;border-radius:50%"></div>
<div class="a" style="left:849.5px;top:93.3px;width:9px;height:9px;border-radius:50%;background:rgba(255,255,255,0.22)"></div>
<div class="a" style="left:860px;top:95.3px;width:5px;height:5px;border:1px solid #ddd;background:#222"></div>
<div class="a" style="left:724px;top:104.31px;width:146px;height:12.0px;background:#555555;"></div>
<div class="a" style="left:724px;top:116.41px;width:146px;height:0.6px;background:#4a4a4a;"></div>
<svg class="a" style="left:725.8px;top:107.51px" width="8.4" height="6"><path d="M0.6,3 C2.2,0.5 6.2,0.5 7.8,3 C6.2,5.5 2.2,5.5 0.6,3 Z" fill="none" stroke="#d4d4d4" stroke-width="0.9"/><circle cx="4.2" cy="3" r="1.4" fill="#d4d4d4"/></svg>
<svg class="a" style="left:740.3px;top:106.71000000000001px" width="6" height="7.5"><path d="M1.5,3.3 L1.5,2.4 C1.5,0.4 4.5,0.4 4.5,2.4 L4.5,3.3" fill="none" stroke="#d4d4d4" stroke-width="0.9"/><rect x="0.4" y="3.3" width="5.2" height="4" fill="#d4d4d4"/><rect x="2.6" y="4.5" width="0.8" height="1.6" fill="#555"/></svg>
<div class="a" style="left:752px;top:105.81px;width:0.8px;height:9.5px;background:#6a6a6a;"></div>
<div class="a" style="left:782.5px;top:104.8px;width:11px;height:11.5px;background:#fff;border:1px solid #2a2a2a"><div style="position:absolute;left:2px;top:1.5px;width:6px;height:7px;background:#f4e6b8;border-radius:1px 3px 1px 3px"></div></div>
<div class="a" style="left:796.5px;top:105.61px;font-size:8.4px;line-height:10.4px;color:#e8e8e8;white-space:nowrap;font-weight:bold">左</div>
<div class="a" style="left:848.3px;top:105.81px;width:0.8px;height:9.5px;background:#6a6a6a;"></div>
<div class="a" style="left:851px;top:107.5px;width:6px;height:6px;border:1px solid #c8c8c8;border-radius:50%"></div>
<div class="a" style="left:724px;top:116.97999999999999px;width:146px;height:12.0px;background:#555555;"></div>
<div class="a" style="left:724px;top:129.07999999999998px;width:146px;height:0.6px;background:#4a4a4a;"></div>
<svg class="a" style="left:725.8px;top:120.17999999999999px" width="8.4" height="6"><path d="M0.6,3 C2.2,0.5 6.2,0.5 7.8,3 C6.2,5.5 2.2,5.5 0.6,3 Z" fill="none" stroke="#d4d4d4" stroke-width="0.9"/><circle cx="4.2" cy="3" r="1.4" fill="#d4d4d4"/></svg>
<svg class="a" style="left:740.3px;top:119.38px" width="6" height="7.5"><path d="M1.5,3.3 L1.5,2.4 C1.5,0.4 4.5,0.4 4.5,2.4 L4.5,3.3" fill="none" stroke="#d4d4d4" stroke-width="0.9"/><rect x="0.4" y="3.3" width="5.2" height="4" fill="#d4d4d4"/><rect x="2.6" y="4.5" width="0.8" height="1.6" fill="#555"/></svg>
<div class="a" style="left:752px;top:118.47999999999999px;width:0.8px;height:9.5px;background:#6a6a6a;"></div>
<div class="a" style="left:782.5px;top:117.5px;width:11px;height:11.5px;background:#fff;border:1px solid #2a2a2a"><div style="position:absolute;left:2px;top:1.5px;width:6px;height:7px;background:#f4e6b8;border-radius:1px 3px 1px 3px"></div></div>
<div class="a" style="left:796.5px;top:118.27999999999999px;font-size:8.4px;line-height:10.4px;color:#e8e8e8;white-space:nowrap;font-weight:bold">&lt;路径&gt;</div>
<div class="a" style="left:848.3px;top:118.47999999999999px;width:0.8px;height:9.5px;background:#6a6a6a;"></div>
<div class="a" style="left:851px;top:120.2px;width:6px;height:6px;border:1px solid #c8c8c8;border-radius:50%"></div>
<div class="a" style="left:724px;top:129.65px;width:146px;height:12.0px;background:#555555;"></div>
<div class="a" style="left:724px;top:141.75px;width:146px;height:0.6px;background:#4a4a4a;"></div>
<svg class="a" style="left:725.8px;top:132.85px" width="8.4" height="6"><path d="M0.6,3 C2.2,0.5 6.2,0.5 7.8,3 C6.2,5.5 2.2,5.5 0.6,3 Z" fill="none" stroke="#d4d4d4" stroke-width="0.9"/><circle cx="4.2" cy="3" r="1.4" fill="#d4d4d4"/></svg>
<svg class="a" style="left:740.3px;top:132.04999999999998px" width="6" height="7.5"><path d="M1.5,3.3 L1.5,2.4 C1.5,0.4 4.5,0.4 4.5,2.4 L4.5,3.3" fill="none" stroke="#d4d4d4" stroke-width="0.9"/><rect x="0.4" y="3.3" width="5.2" height="4" fill="#d4d4d4"/><rect x="2.6" y="4.5" width="0.8" height="1.6" fill="#555"/></svg>
<div class="a" style="left:752px;top:131.15px;width:0.8px;height:9.5px;background:#6a6a6a;"></div>
<div class="a" style="left:782.5px;top:130.2px;width:11px;height:11.5px;background:#fff;border:1px solid #2a2a2a"><div style="position:absolute;left:2px;top:1.5px;width:6px;height:7px;background:#f4e6b8;border-radius:1px 3px 1px 3px"></div></div>
<div class="a" style="left:796.5px;top:130.95000000000002px;font-size:8.4px;line-height:10.4px;color:#e8e8e8;white-space:nowrap;font-weight:bold">&lt;路径&gt;</div>
<div class="a" style="left:848.3px;top:131.15px;width:0.8px;height:9.5px;background:#6a6a6a;"></div>
<div class="a" style="left:851px;top:132.8px;width:6px;height:6px;border:1px solid #c8c8c8;border-radius:50%"></div>
<div class="a" style="left:724px;top:142.32px;width:146px;height:12.0px;background:#555555;"></div>
<div class="a" style="left:724px;top:154.42px;width:146px;height:0.6px;background:#4a4a4a;"></div>
<svg class="a" style="left:725.8px;top:145.51999999999998px" width="8.4" height="6"><path d="M0.6,3 C2.2,0.5 6.2,0.5 7.8,3 C6.2,5.5 2.2,5.5 0.6,3 Z" fill="none" stroke="#d4d4d4" stroke-width="0.9"/><circle cx="4.2" cy="3" r="1.4" fill="#d4d4d4"/></svg>
<svg class="a" style="left:740.3px;top:144.71999999999997px" width="6" height="7.5"><path d="M1.5,3.3 L1.5,2.4 C1.5,0.4 4.5,0.4 4.5,2.4 L4.5,3.3" fill="none" stroke="#d4d4d4" stroke-width="0.9"/><rect x="0.4" y="3.3" width="5.2" height="4" fill="#d4d4d4"/><rect x="2.6" y="4.5" width="0.8" height="1.6" fill="#555"/></svg>
<div class="a" style="left:752px;top:143.82px;width:0.8px;height:9.5px;background:#6a6a6a;"></div>
<div class="a" style="left:848.3px;top:143.82px;width:0.8px;height:9.5px;background:#6a6a6a;"></div>
<div class="a" style="left:851px;top:145.5px;width:6px;height:6px;border:1px solid #c8c8c8;border-radius:50%"></div>
<svg class="a" style="left:865px;top:63px" width="4.5" height="4.5"><path d="M0,0 L4.5,0 L4.5,4.5 Z" fill="#e0e0e0"/></svg>
<svg class="a" style="left:748px;top:439px;opacity:0.7;filter:blur(0.6px)" width="112" height="40"><g fill="none" stroke="#3e6a9e" stroke-width="2.6"><path d="M9,25.5 C5,22 3.5,19 3.5,15.5 C3.5,9.5 8.5,4.5 14.4,4.5 C20.3,4.5 25.3,9.5 25.3,15.5 C25.3,19 23.8,22 19.8,25.5"/><path d="M11,25 L11,16 C11,12.5 17.8,12.5 17.8,16 L17.8,25"/></g><g stroke="#3e6a9e" stroke-width="1.8"><path d="M9.5,28.5 L19.5,28.5 M10,31.5 L19,31.5 M11,34.5 L18,34.5"/></g><g fill="none" stroke="#3e6a9e" stroke-width="3"><path d="M36.5,8.5 L36.5,17.5 C36.5,24.5 46.5,24.5 46.5,17.5 L46.5,8.5"/><path d="M73.5,8.5 L73.5,17.5 C73.5,24.5 83.5,24.5 83.5,17.5 L83.5,8.5"/><path d="M52.3,8.5 L52.3,25"/><path d="M58.3,8.5 L58.3,25"/><path d="M64.3,8.5 L64.3,25"/><path d="M89.6,8.5 L89.6,25"/><path d="M96.3,8.5 L96.3,25"/><path d="M103,8.5 L103,25"/></g><g fill="#3e6a9e" opacity="0.8"><rect x="36.0" y="28" width="3.5" height="2.5"/><rect x="45.5" y="28" width="3.5" height="2.5"/><rect x="55.0" y="28" width="3.5" height="2.5"/><rect x="64.5" y="28" width="3.5" height="2.5"/><rect x="74.0" y="28" width="3.5" height="2.5"/><rect x="83.5" y="28" width="3.5" height="2.5"/><rect x="93.0" y="28" width="3.5" height="2.5"/><rect x="102.5" y="28" width="3.5" height="2.5"/></g></svg>
<div class="a" style="left:721px;top:479px;width:149px;height:12px;background:#535353;"></div>
<div class="a" style="left:724px;top:479.5px;font-size:8.2px;line-height:10.2px;color:#e0e0e0;white-space:nowrap;font-weight:bold">7 图层</div>
<svg class="a" style="left:769px;top:480px" width="10" height="10"><path d="M1,3 L1,9 L8,9 L8,6" fill="none" stroke="#d0d0d0"/><path d="M4,6 L9,1 M6,1 L9,1 L9,4" fill="none" stroke="#d0d0d0"/></svg>
<svg class="a" style="left:785px;top:480px" width="10" height="10"><circle cx="6" cy="4" r="3" fill="none" stroke="#d0d0d0" stroke-width="1.1"/><path d="M3.8,6.2 L1,9" stroke="#d0d0d0" stroke-width="1.3"/></svg>
<svg class="a" style="left:801px;top:481px" width="8" height="8"><rect x="0.5" y="0.5" width="6" height="6" fill="none" stroke="#777"/><rect x="2.5" y="2.5" width="3" height="3" fill="#777"/></svg>
<svg class="a" style="left:815px;top:481px" width="11" height="8"><path d="M1,4 L4,4 M7,1 L7,7 M9,1 L9,7" stroke="#777" fill="none"/></svg>
<svg class="a" style="left:833.5px;top:480.5px" width="8" height="9"><rect x="0.5" y="0.5" width="7" height="8" fill="#ddd"/><rect x="0.5" y="0.5" width="3" height="3" fill="#555"/></svg>
<svg class="a" style="left:849px;top:480px" width="8" height="10"><path d="M0.5,2 L7.5,2 M3,2 L3,0.8 L5,0.8 L5,2" fill="none" stroke="#d0d0d0"/><path d="M1.2,3 L1.8,9.5 L6.2,9.5 L6.8,3 Z" fill="none" stroke="#d0d0d0"/><path d="M3,4.5 L3,8 M5,4.5 L5,8" stroke="#d0d0d0" stroke-width="0.7"/></svg>
<div class="a" style="left:22px;top:482px;width:687.3px;height:8px;background:#3e3e3e;"></div>
<div class="a" style="left:150px;top:489.5px;width:695px;height:1.5px;background:#d4d4d4;border-radius:0 2px 0 0"></div>
<div class="a" style="left:26px;top:483px;font-size:10px;line-height:12px;color:#ececec;white-space:nowrap;font-weight:bold;transform:scaleX(0.75);transform-origin:0 0">66.67%</div>
<svg class="a" style="left:57.0px;top:483.9px" width="6" height="4.2"><path d="M1,1 L3.00,3.2 L5,1" fill="none" stroke="#bbb" stroke-width="1.1"/></svg>
<div class="a" style="left:65.5px;top:482.5px;width:0.8px;height:7px;background:#555;"></div>
<div class="a" style="left:72px;top:481px;font-size:6px;line-height:8px;color:#777;white-space:nowrap;">|◀ ◀</div>
<div class="a" style="left:94px;top:483px;font-size:9px;line-height:11px;color:#e0e0e0;white-space:nowrap;">1</div>
<svg class="a" style="left:119.0px;top:483.9px" width="6" height="4.2"><path d="M1,1 L3.00,3.2 L5,1" fill="none" stroke="#bbb" stroke-width="1.1"/></svg>
<div class="a" style="left:133px;top:481px;font-size:6px;line-height:8px;color:#777;white-space:nowrap;">▶ ▶|</div>
<div class="a" style="left:206px;top:483.5px;font-size:7.5px;line-height:9.5px;color:#dcdcdc;white-space:nowrap;font-weight:bold">留管</div>
<svg class="a" style="left:278px;top:483.5px" width="5" height="6"><path d="M0.5,0.5 L4.5,3 L0.5,5.5 Z" fill="#ddd"/></svg>
<div class="a" style="left:289px;top:481px;font-size:7px;line-height:9px;color:#999;white-space:nowrap;">‹</div>
<div class="a" style="left:522px;top:483px;width:14px;height:6px;background:#555;border-radius:3px"></div>
<div class="a" style="left:701px;top:481px;font-size:7px;line-height:9px;color:#999;white-space:nowrap;">›</div>

<!-- dialog shadow -->
<div class="a" style="left:541px;top:145px;width:340px;height:230px;border-radius:4px;box-shadow:0 6px 22px rgba(0,0,0,0.45)"></div>
<div class="a" style="left:541px;top:145px;width:340px;height:230px;border-radius:4px 4px 3px 3px;background:#565656;overflow:hidden">
 <div class="a" style="left:0;top:0;width:340px;height:13.5px;background:linear-gradient(#d2d2d2,#bdbdbd);border-bottom:1px solid #9a9a9a"></div>
 <div class="a" style="left:154.5px;top:1.5px;font-size:8.2px;color:#2a2a2a;line-height:11px">拾色器</div>
 <div class="a" style="left:9.5px;top:22.5px;font-size:7.9px;color:#e0e0e0;line-height:12px">选择颜色:</div>
 <div class="a" style="left:9px;top:38px;width:156px;height:155px;background:linear-gradient(to bottom,rgba(0,0,0,0) 0%,rgba(0,0,0,0.2) 25%,rgba(0,0,0,0.5) 50%,rgba(0,0,0,0.8) 75%,#000 100%),linear-gradient(to bottom,rgba(255,255,255,0.3) 0%,rgba(255,255,255,0.1) 25%,rgba(255,255,255,0) 50%),linear-gradient(to right,#f8a0a0 0%,#eef098 17%,#88e488 33%,#90ecec 50%,#a098f0 67%,#f498e8 83%,#f8a0a0 100%)"></div>
 <div class="a" style="left:23px;top:38.5px;width:7.5px;height:7.5px;border:1px solid #222;border-radius:50%"></div>
 <div class="a" style="left:176px;top:38px;width:16px;height:155px;background:linear-gradient(#fbaa00,#fdf8ee)"></div>
 <div class="a" style="left:171px;top:158.5px;width:0;height:0;border-left:4.5px solid #c8c8c8;border-top:3px solid transparent;border-bottom:3px solid transparent"></div>
 <div class="a" style="left:192.5px;top:158.5px;width:0;height:0;border-right:4.5px solid #c8c8c8;border-top:3px solid transparent;border-bottom:3px solid transparent"></div>
 <div class="a" style="left:202.5px;top:35px;width:38.5px;height:49px;background:#fcedc6;border:1px solid #333"></div>
 <div class="a" style="left:249.5px;top:75.5px;width:9.5px;height:9.5px;background:#f4f2c2"></div>
 <svg class="a" style="left:250.5px;top:63.5px" width="8" height="8"><path d="M4,0.6 L7.2,2.3 L7.2,5.7 L4,7.4 L0.8,5.7 L0.8,2.3 Z M0.8,2.3 L4,4 L7.2,2.3 M4,4 L4,7.4" fill="none" stroke="#8a8a8a" stroke-width="0.9"/></svg>
 <div class="a btn" style="left:267.5px;top:35px;width:56.5px;height:16px;border:2px solid #f0f0f0;line-height:12px">确定</div>
 <div class="a btn" style="left:267.5px;top:53px;width:56.5px;height:15.5px;border:1.5px solid #c4c4c4;line-height:12.5px">取消</div>
 <div class="a btn" style="left:267.5px;top:70.5px;width:56.5px;height:15.5px;border:1.5px solid #c4c4c4;line-height:12.5px">颜色色板</div>
 <div class="a" style="left:203px;top:94.7px;width:8.6px;height:8.6px;border:1px solid #cfcfcf;border-radius:50%"></div>
 <div class="a lbl" style="left:213.5px;top:93.0px">H:</div>
 <div class="a inp" style="left:226px;top:93.5px">42°</div>
 <div class="a" style="left:203px;top:110.0px;width:8.6px;height:8.6px;background:#dcdcdc;border-radius:50%"></div>
 <div class="a" style="left:205.6px;top:112.6px;width:3.4px;height:3.4px;background:#3a3a3a;border-radius:50%"></div>
 <div class="a lbl" style="left:213.5px;top:108.3px">S:</div>
 <div class="a inp" style="left:226px;top:108.8px">21%</div>
 <div class="a" style="left:203px;top:125.3px;width:8.6px;height:8.6px;border:1px solid #cfcfcf;border-radius:50%"></div>
 <div class="a lbl" style="left:213.5px;top:123.6px">B:</div>
 <div class="a inp" style="left:226px;top:124.1px">98%</div>
 <div class="a" style="left:203px;top:140.6px;width:8.6px;height:8.6px;border:1px solid #cfcfcf;border-radius:50%"></div>
 <div class="a lbl" style="left:213.5px;top:138.9px">R:</div>
 <div class="a inp" style="left:226px;top:139.4px">252</div>
 <div class="a lbl" style="left:273.5px;top:138.9px;color:#bdbdbd">C:</div>
 <div class="a inp" style="left:285px;top:139.4px;width:37px">2%</div>
 <div class="a" style="left:203px;top:155.9px;width:8.6px;height:8.6px;border:1px solid #cfcfcf;border-radius:50%"></div>
 <div class="a lbl" style="left:213.5px;top:154.2px">G:</div>
 <div class="a inp" style="left:226px;top:154.7px">237</div>
 <div class="a lbl" style="left:273.5px;top:154.2px;color:#bdbdbd">M:</div>
 <div class="a inp" style="left:285px;top:154.7px;width:37px">8%</div>
 <div class="a" style="left:203px;top:171.2px;width:8.6px;height:8.6px;border:1px solid #cfcfcf;border-radius:50%"></div>
 <div class="a lbl" style="left:213.5px;top:169.5px">B:</div>
 <div class="a inp" style="left:226px;top:170.0px">198</div>
 <div class="a lbl" style="left:273.5px;top:169.5px;color:#bdbdbd">Y:</div>
 <div class="a inp" style="left:285px;top:170.0px;width:37px">27%</div>
 <div class="a lbl" style="left:205px;top:184.8px;color:#aaa">#</div>
 <div class="a" style="left:211px;top:184.8px;width:55px;height:11.5px;background:#fff;border:1px solid #8ab4e8;box-shadow:0 0 0 1px #6fa0de"><span style="position:absolute;left:2.5px;top:0.5px;background:#b5d3f8;color:#333;font-size:8.5px;line-height:10px;padding:0 1px">fcedc6</span></div>
 <div class="a lbl" style="left:273.5px;top:184.8px;color:#bdbdbd">K:</div>
 <div class="a inp" style="left:285px;top:185.3px;width:37px">0%</div>
 <div class="a" style="left:10.2px;top:204px;width:7px;height:7px;border:1px solid #cfcfcf;border-radius:1px"></div>
 <div class="a" style="left:20px;top:201.5px;font-size:8px;color:#e6e6e6;line-height:11px">仅限 Web 颜色</div>
</div>

</body></html>
